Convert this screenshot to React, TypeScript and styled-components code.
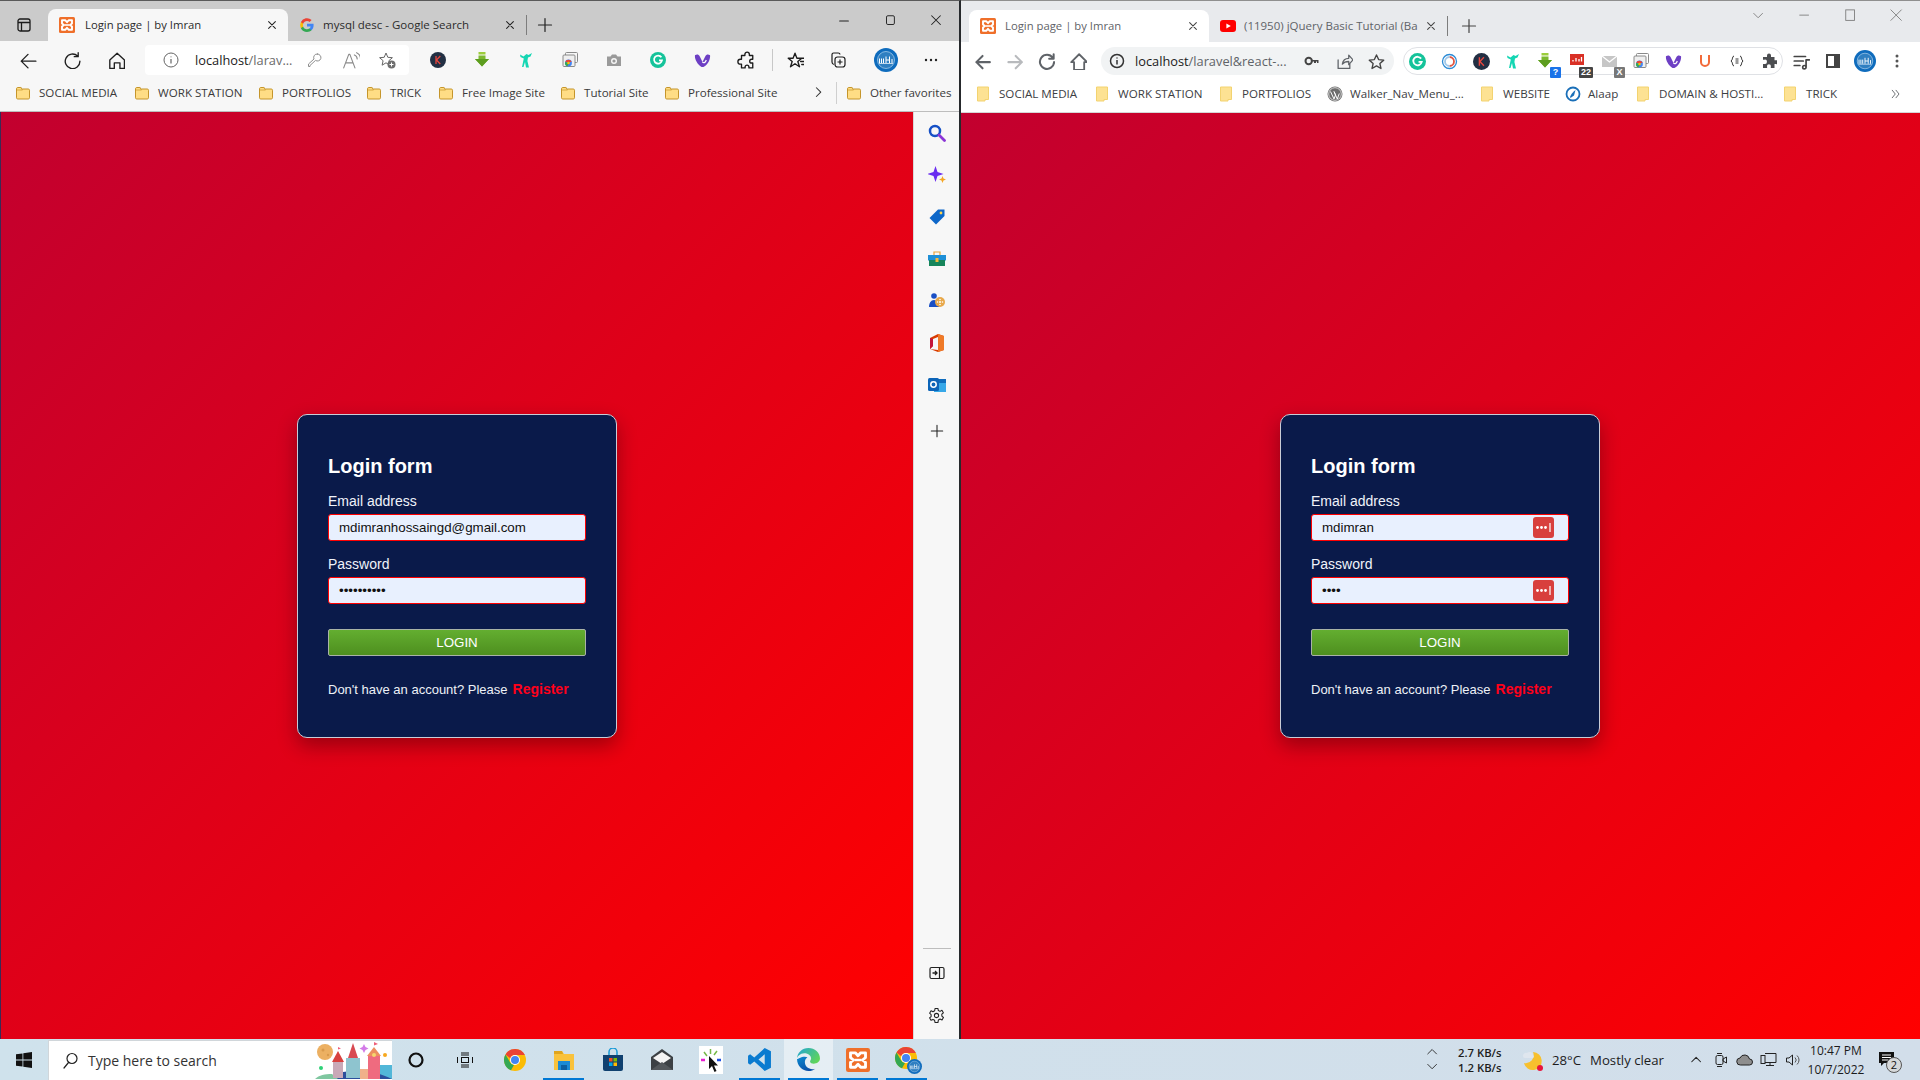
import React from "react";
import styled, { createGlobalStyle } from "styled-components";

const UI = `"Open Sans", "Noto Sans", "Liberation Sans", sans-serif`;
const ARIAL = `"Liberation Sans", Arial, sans-serif`;

const Global = createGlobalStyle`
  html, body { margin: 0; padding: 0; height: 100%; overflow: hidden; }
  #root { height: 100%; }
  * { box-sizing: border-box; }
`;

/* ---------- page ---------- */
const Desktop = styled.div`
  width: 1920px; height: 1080px; display: flex; flex-direction: column; font-family: ${UI};
`;
const Windows = styled.div`
  flex: 1; min-height: 0; display: flex;
`;
const Win = styled.section<{ $w: number; $edge?: boolean; $top: string }>`
  flex: 0 0 ${(p) => p.$w}px; display: flex; flex-direction: column; min-width: 0;
  border-top: 1px solid ${(p) => p.$top};
  border-right: ${(p) => (p.$edge ? "2px solid #26292c" : "none")};
  background: #fff;
`;
const Strip = styled.div<{ $bg: string; $h: number }>`
  flex: 0 0 ${(p) => p.$h}px; background: ${(p) => p.$bg}; display: flex; align-items: flex-end;
`;
const StripSlot = styled.div<{ $w: number }>`
  flex: 0 0 ${(p) => p.$w}px; height: 32px; display: flex; align-items: center; justify-content: center;
`;
const Tab = styled.div<{ $active?: boolean; $w: number; $bg?: string; $color: string; $font: number }>`
  flex: 0 0 ${(p) => p.$w}px; height: 32px; display: flex; align-items: center; padding: 0 10px 1px 11px;
  background: ${(p) => (p.$active ? p.$bg : "transparent")}; border-radius: 8px 8px 0 0;
  color: ${(p) => p.$color}; font-size: ${(p) => p.$font}px; white-space: nowrap;
`;
const TabTitle = styled.span<{ $ml: number }>`
  flex: 1; min-width: 0; overflow: hidden; margin-left: ${(p) => p.$ml}px; padding-right: 6px;
`;
const StripDivider = styled.div`
  flex: 0 0 1px; height: 20px; margin-bottom: 6px; background: #7d7d7d;
`;
const WinControls = styled.div<{ $color: string }>`
  margin-left: auto; display: flex; align-self: flex-start; color: ${(p) => p.$color};
`;
const WinBtn = styled.div<{ $w: number; $h: number }>`
  flex: 0 0 ${(p) => p.$w}px; height: ${(p) => p.$h}px; display: flex; align-items: center; justify-content: center;
`;

const Toolbar = styled.div<{ $bg: string; $pad: number }>`
  flex: 0 0 38px; display: flex; align-items: center; background: ${(p) => p.$bg}; padding-left: ${(p) => p.$pad}px;
`;
const Slot = styled.div<{ $w: number; $ml?: number; $tint?: string }>`
  flex: 0 0 ${(p) => p.$w}px; height: 28px; display: flex; align-items: center; justify-content: center;
  margin-left: ${(p) => p.$ml ?? 0}px; color: ${(p) => p.$tint ?? "#1f1f1f"};
`;
const Address = styled.div<{ $w: number; $ml: number; $bg: string; $pl: number; $pr: number; $r: number; $h: number }>`
  flex: 0 0 ${(p) => p.$w}px; height: ${(p) => p.$h}px; margin-left: ${(p) => p.$ml}px; background: ${(p) => p.$bg};
  border-radius: ${(p) => p.$r}px; display: flex; align-items: center;
  padding: 0 ${(p) => p.$pr}px 0 ${(p) => p.$pl}px;
`;
const Url = styled.span<{ $ml: number; $color: string; $size: number }>`
  flex: 1; min-width: 0; margin-left: ${(p) => p.$ml}px; color: ${(p) => p.$color}; font-size: ${(p) => p.$size}px;
  white-space: nowrap; overflow: hidden;
  b { font-weight: 400; color: #1a1a1a; }
`;
const ToolSep = styled.div`
  flex: 0 0 8px; height: 22px; display: flex; justify-content: center;
  &::before { content: ""; width: 1px; background: #c8c8c8; }
`;
const ExtPill = styled.div`
  flex: 0 0 379px; height: 28px; margin-left: 9px; border: 1px solid #dfe1e5; border-radius: 14px;
  display: flex; align-items: center; gap: 6px;
`;
const PillSlot = styled.div`
  flex: 0 0 26px; height: 26px; display: flex; align-items: center; justify-content: center; position: relative;
`;
const Badge = styled.span<{ $bg: string }>`
  position: absolute; right: -3px; bottom: -4px; min-width: 11px; height: 11px; padding: 0 2px; background: ${(p) => p.$bg};
  color: #fff; font: 700 9px/11px ${ARIAL}; border-radius: 1px; text-align: center;
`;

const Bookmarks = styled.div<{ $bg: string; $pad: number }>`
  flex: 0 0 33px; display: flex; align-items: center; background: ${(p) => p.$bg}; padding: 0 0 5px ${(p) => p.$pad}px;
  border-bottom: 1px solid ${(p) => (p.$bg === "#fff" ? "#d6d6d6" : "#bdbdbd")};
  font-size: 11.6px; color: #3a3a3a;
`;
const Mark = styled.div<{ $gap: number; $w: number; $color: string }>`
  flex: 0 0 ${(p) => p.$w}px; display: flex; align-items: center; gap: ${(p) => p.$gap}px; white-space: nowrap;
  color: ${(p) => p.$color}; overflow: hidden;
`;
const MarkEnd = styled.div<{ $ml: number }>`
  margin-left: ${(p) => p.$ml}px; display: flex; align-items: center; gap: 8px; white-space: nowrap;
`;
const MarkSep = styled.div`
  width: 1px; height: 22px; background: #cfcfcf;
`;

const Body = styled.div`
  flex: 1; min-height: 0; display: flex;
`;
const Stage = styled.main<{ $trim?: number; $line?: boolean }>`
  flex: 1; min-width: 0; display: flex; align-items: center; justify-content: center;
  padding-right: ${(p) => p.$trim ?? 0}px;
  background: linear-gradient(to bottom right, #c2002f 0%, #ff0000 100%);
  border-left: ${(p) => (p.$line ? "1px solid #3b2a55" : "none")};
`;
const Side = styled.aside`
  flex: 0 0 46px; background: #f7f7f7; border-left: 1px solid #d8d8d8; display: flex; flex-direction: column;
  align-items: center;
`;
const SideIcon = styled.div<{ $mt?: number }>`
  flex: 0 0 42px; width: 100%; display: flex; align-items: center; justify-content: center; color: #222;
  margin-top: ${(p) => p.$mt ?? 0}px;
`;
const SideFoot = styled.div`
  margin-top: auto; width: 100%; display: flex; flex-direction: column; align-items: center; padding-bottom: 3px;
`;
const SideRule = styled.div`
  width: 28px; height: 1px; background: #bdbdbd; margin-bottom: 3px;
`;

/* ---------- login card ---------- */
const Card = styled.form`
  width: 320px; height: 324px; padding: 39px 30px 0; background: #0a1a4a; border: 1px solid #c9ccd6; border-radius: 10px;
  box-shadow: 0 8px 20px rgba(0, 0, 0, 0.32); font-family: ${ARIAL}; color: #fff; display: flex; flex-direction: column;
`;
const Title = styled.h2`
  margin: 0 0 15px; font-size: 20px; line-height: 24px; font-weight: 700;
`;
const Label = styled.label`
  display: block; font-size: 14px; line-height: 16px; margin-bottom: 5px; color: #f0f3fa;
`;
const Field = styled.div`
  position: relative; height: 27px; margin-bottom: 15px;
`;
const Input = styled.input`
  display: block; width: 100%; height: 27px; padding: 0 10px; border: 1px solid #ff0000; border-radius: 3px; outline: none;
  background: #e8f0fe; color: #111; font-family: ${ARIAL}; font-size: 13.33px;
`;
const PassBadge = styled.span`
  position: absolute; top: 3px; right: 15px; width: 21px; height: 21px; display: block; line-height: 0;
`;
const LoginBtn = styled.button`
  height: 27px; margin-top: 10px; background: linear-gradient(#63ae30, #4e8f1f); border: 1px solid #a9b3a6; border-radius: 2px;
  color: #fff; font-family: ${ARIAL}; font-size: 13.33px; padding: 0;
`;
const Foot = styled.p`
  margin: 25px 0 0; font-size: 13px; line-height: 16px; color: #eef1f7;
  a { color: #ff0019; font-weight: 700; font-size: 14px; margin-left: 5px; text-decoration: none; }
`;

/* ---------- taskbar ---------- */
const Taskbar = styled.footer`
  flex: 0 0 40px; display: flex; align-items: stretch; background: linear-gradient(90deg, #cfe2ec, #d2deea);
  color: #1c1c1c;
`;
const StartBtn = styled.div`
  flex: 0 0 46px; display: flex; align-items: center; justify-content: center; padding-left: 1px;
`;
const SearchBox = styled.div`
  flex: 0 0 344px; margin: 1px 0 0 2px; background: #fff; display: flex; align-items: center; padding-left: 13px;
  border: 1px solid #d0d6da; border-width: 1px 0 0 1px;
`;
const SearchText = styled.span`
  margin-left: 9px; font-size: 14px; color: #333; white-space: nowrap;
`;
const Doodle = styled.div`
  margin-left: auto; height: 100%; line-height: 0;
`;
const BarPlain = styled.div<{ $w: number }>`
  flex: 0 0 ${(p) => p.$w}px; display: flex; align-items: center; justify-content: center;
`;
const BarApp = styled.div<{ $on?: boolean; $hi?: boolean }>`
  flex: 0 0 49px; position: relative; display: flex; align-items: center; justify-content: center;
  background: ${(p) => (p.$hi ? "rgba(255,255,255,.45)" : "transparent")};
  &::after {
    content: ""; position: absolute; bottom: 0; left: 4px; right: 4px; height: 2px;
    background: ${(p) => (p.$on ? "#0078d4" : "transparent")};
  }
`;
const Tray = styled.div`
  margin-left: auto; flex: 0 0 499px; display: flex; align-items: center;
`;
const TraySlot = styled.div<{ $w: number; $ml?: number }>`
  flex: 0 0 ${(p) => p.$w}px; margin-left: ${(p) => p.$ml ?? 0}px; display: flex; flex-direction: column; align-items: center;
  justify-content: center; height: 100%;
`;
const Speed = styled.div`
  flex: 0 0 43px; min-width: 0; margin-left: 13px; text-align: right; font-size: 11.3px; font-weight: 600; line-height: 15px; white-space: nowrap;
`;
const Weather = styled.span<{ $ml: number }>`
  margin-left: ${(p) => p.$ml}px; font-size: 13.2px; white-space: nowrap;
`;
const Clock = styled.div`
  flex: 0 0 62px; text-align: center; font-size: 12px; line-height: 19px; white-space: nowrap;
`;
const Notify = styled.div`
  flex: 1; position: relative; display: flex; align-items: center; padding-left: 11px; height: 100%;
`;
const NotifyCount = styled.span`
  position: absolute; left: 19px; top: 18px; width: 16px; height: 16px; border-radius: 50%; background: #d6d8da; border: 1px solid #555;
  font-size: 11px; line-height: 14px; text-align: center; color: #111;
`;

/* ---------- icons ---------- */
type IP = { s?: number; c?: string };
const Svg = ({ s = 16, children, vb = "0 0 16 16" }: { s?: number; children: React.ReactNode; vb?: string }) => (
  <svg width={s} height={s} viewBox={vb} fill="none" style={{ display: "block", flex: "none" }}>{children}</svg>
);
const Line = ({ s = 16, c = "currentColor", d, w = 1.2 }: IP & { d: string; w?: number }) => (
  <Svg s={s}><path d={d} stroke={c} strokeWidth={w} strokeLinecap="round" strokeLinejoin="round" /></Svg>
);
const Xampp = ({ s = 16 }: IP) => (
  <Svg s={s}>
    <rect width="16" height="16" rx="1.5" fill="#ef6f2a" />
    <path d="M3 3.2h3.2L8 5.2l1.8-2H13v3.2l-2 1.6 2 1.6v3.2H9.8L8 10.8l-1.8 2H3V9.6L5 8 3 6.4z" stroke="#fff" strokeWidth="1.9" strokeLinejoin="round" />
    <path d="M5.6 8h4.8" stroke="#fff" strokeWidth="1.6" />
  </Svg>
);
const GoogleG = ({ s = 16 }: IP) => (
  <Svg s={s}>
    <path d="M14.6 8.2c0-.5 0-1-.1-1.4H8v2.7h3.7a3.2 3.2 0 0 1-1.4 2.1v1.7h2.2c1.3-1.2 2.1-3 2.1-5.1z" fill="#4285f4" />
    <path d="M8 15c1.9 0 3.4-.6 4.5-1.7l-2.2-1.7a4.1 4.1 0 0 1-6.2-2.2H1.9v1.8A7 7 0 0 0 8 15z" fill="#34a853" />
    <path d="M4.1 9.4a4.1 4.1 0 0 1 0-2.7V4.9H1.9a7 7 0 0 0 0 6.3z" fill="#fbbc05" />
    <path d="M8 3.9c1 0 1.9.4 2.6 1l2-2A7 7 0 0 0 1.9 4.9l2.2 1.8C4.7 5.1 6.2 3.9 8 3.9z" fill="#ea4335" />
  </Svg>
);
const YouTube = () => (
  <Svg s={16}><rect y="2" width="16" height="12" rx="3" fill="#f00" /><path d="M6.4 5.4v5.2L10.8 8z" fill="#fff" /></Svg>
);
const Close = ({ c = "#222" }: IP) => <Line s={12} c={c} w={1.4} d="M3.5 3.5l9 9M12.5 3.5l-9 9" />;
const Plus = ({ c = "#222", s = 16 }: IP) => <Line s={s} c={c} w={1.2} d="M8 1.5v13M1.5 8h13" />;
const TabsIcon = () => (
  <Svg s={16}><rect x="2" y="2" width="12" height="12" rx="2" stroke="#1b1b1b" strokeWidth="1.3" /><path d="M2 5.5h12M5.5 5.5V14" stroke="#1b1b1b" strokeWidth="1.3" /></Svg>
);
const KeyIcon = ({ c = "#888", solid }: IP & { solid?: boolean }) =>
  solid ? (
    <Svg s={16}><circle cx="4.7" cy="8" r="3.2" stroke={c} strokeWidth="2" /><path d="M7.5 7h7v3h-1.5V8.6h-1V10H10V8.6H7.5z" fill={c} /></Svg>
  ) : (
    <Line c={c} w={1} d="M10.5 2a3.5 3.5 0 1 1-2 6.4L3 13.5v1H1.5V12L7 7a3.5 3.5 0 0 1 3.5-5z" />
  );
const FolderEdge = () => (
  <Svg s={16}>
    <path d="M1.5 3.8c0-.7.5-1.3 1.2-1.3h3.2l1.6 1.5h5.8c.7 0 1.2.5 1.2 1.2v7.6c0 .7-.5 1.2-1.2 1.2H2.7c-.7 0-1.2-.5-1.2-1.2z" fill="#ffdd85" stroke="#c5952b" strokeWidth="1" />
    <path d="M1.8 5h5.7L6 3" stroke="#c5952b" strokeWidth=".7" />
  </Svg>
);
const FolderChrome = () => (
  <svg width="12" height="16" viewBox="0 0 12 16" fill="none" style={{ display: "block", flex: "none" }}>
    <path d="M.5 1h11v12.5H8V15H.5z" fill="#fde293" stroke="#f3d370" />
  </svg>
);
const Grammarly = ({ s = 16 }: IP) => (
  <Svg s={s}><circle cx="8" cy="8" r="8" fill="#15c39a" /><path d="M11.4 5.3A4 4 0 1 0 12 8.4H9" stroke="#fff" strokeWidth="1.7" /></Svg>
);
const KAvatar = ({ s = 16 }: IP) => (
  <Svg s={s}><circle cx="8" cy="8" r="8" fill="#222f43" /><path d="M6 4v8M10.3 4L6.5 8l3.8 4" stroke="#e6463e" strokeWidth="1.3" /></Svg>
);
const DownArrow = () => (
  <Svg s={18} vb="0 0 18 18"><path d="M5.5 1h7v2.5h-7z" fill="#9ccc3c" /><path d="M5.5 4.5h7V8H16l-7 7.5L2 8h3.5z" fill="#7cb82f" /><path d="M9 15.5L2 8h14z" fill="#5d9d1f" /></Svg>
);
const Figure = () => (
  <Svg s={18} vb="0 0 18 18"><path d="M3 3.5l3.5 2 3-2.5 2 1 3.5-2-1.5 3.5-2.5 1-.6 3.5 1.6 6.5H9L8 11 6.5 16H5l1.8-8.5L3.5 6z" fill="#14d6b3" /></Svg>
);
const ChromeStack = () => (
  <Svg s={18} vb="0 0 18 18">
    <rect x="4.5" y="1.5" width="12" height="10" rx="1" stroke="#8a8a8a" /><rect x="2" y="4" width="12" height="11.5" rx="1" fill="#efefef" stroke="#8a8a8a" />
    <circle cx="7.5" cy="12" r="3.4" fill="#4285f4" /><path d="M4.2 11a3.4 3.4 0 0 1 6.4 0H7.5z" fill="#ea4335" /><path d="M4.2 11a3.4 3.4 0 0 0 2.3 4.3L8 12z" fill="#34a853" /><circle cx="7.5" cy="12" r="1.3" fill="#fbbc05" />
  </Svg>
);
const Camera = () => (
  <Svg s={16}><path d="M1 4.5h3.5L6 2.5h4l1.5 2H15V14H1z" fill="#9a9a9a" /><circle cx="8" cy="9" r="3" fill="#f7f7f7" /><circle cx="8" cy="9" r="1.6" fill="#9a9a9a" /></Svg>
);
const Viber = ({ s = 18 }: IP) => (
  <Svg s={s} vb="0 0 18 18"><path d="M1 3.5c2-1.5 4-1 5 1l3 6 3-6c1-2 3-2.5 5-1 .5 4-2 10-7 12.5h-2C4 13.5.5 8 1 3.5z" fill="#6d3fc4" /><path d="M9 10.5c1 1.5 3 1 4-2" stroke="#fff" strokeWidth="1.3" /></Svg>
);
const PuzzleOutline = () => (
  <Line s={18} c="#1c1c1c" w={1.2} d="M7 3a2 2 0 1 1 4 0v1h3v3.3h-1a1.7 1.7 0 1 0 0 3.4h1V15h-3.4v-.8a1.7 1.7 0 1 0-3.4 0v.8H4v-3.3H3a2.2 2.2 0 1 1 0-4.4h1V4h3z" />
);
const FavList = () => (
  <Line s={18} c="#1c1c1c" w={1.2} d="M8 2l1.7 4.4H14L10.5 9.3 12 14 8 11.3 4 14l1.500-4.700L2 6.400h4.300zM12 6.400h4M13 9.300h3M14 12h2" />
);
const Collections = () => (
  <Svg s={18} vb="0 0 18 18"><path d="M3 11V3.5C3 2.500 3.800 2 4.600 2h4.600c1 0 1.800.7 1.800 1.600M3 11c0 1.200.6 2 1.800 2.500" stroke="#1c1c1c" strokeWidth="1.2" /><rect x="6" y="6" width="10" height="10" rx="2.5" fill="#f7f7f7" stroke="#1c1c1c" strokeWidth="1.2" /><path d="M11 8.500v5M8.500 11h5" stroke="#1c1c1c" strokeWidth="1.2" /></Svg>
);
const Avatar = ({ s = 24 }: IP) => (
  <Svg s={s} vb="0 0 24 24">
    <circle cx="12" cy="12" r="12" fill="#0f6cbd" /><circle cx="12" cy="12" r="8.5" fill="#2f7fc1" stroke="#cfe5f6" strokeWidth=".6" />
    <path d="M5.500 15V10.500M7.500 15V10.500M9.500 15V10.500M12 15V8.500M12 12h3.500M15.500 15V8.500M18 15V11" stroke="#fff" strokeWidth="1" />
    <path d="M5 15.500h14" stroke="#fff" strokeWidth=".7" />
  </Svg>
);
const Dots = () => (
  <Svg s={16}><circle cx="3" cy="8" r="1.2" fill="#222" /><circle cx="8" cy="8" r="1.2" fill="#222" /><circle cx="13" cy="8" r="1.2" fill="#222" /></Svg>
);
const Alaap = () => (
  <Svg s={16}><circle cx="8" cy="8" r="6.5" stroke="#1a6fb8" strokeWidth="1.8" /><path d="M5 11c1-3 3-5 5.500-7L9 9.500 5.500 12z" fill="#1a6fb8" /></Svg>
);
const Wordpress = () => (
  <Svg s={16}><circle cx="8" cy="8" r="7.5" fill="#6d6d6d" /><circle cx="8" cy="8" r="6.3" stroke="#fff" strokeWidth=".7" /><path d="M3.500 5.500L7 13l1.500-4-1.500-3.500M7 5.500L10.300 13l2-5.500" stroke="#fff" strokeWidth="1" /></Svg>
);
const RedBadge = () => (
  <Svg s={16}><path d="M1 1h14v11H1z" fill="#d93025" /><path d="M4 8.500V7M7 8.500V5M10 8.500V6M12.500 8.500V4" stroke="#fff" strokeWidth="1.3" /></Svg>
);
const MailGrey = () => (
  <Svg s={17} vb="0 0 17 17"><rect x="1" y="3" width="15" height="11" fill="#c6c6c6" /><path d="M1 3l7.500 6L16 3" stroke="#fff" strokeWidth="1.3" /></Svg>
);
const Circle360 = () => (
  <Svg s={17} vb="0 0 17 17"><circle cx="8.5" cy="8.5" r="7" stroke="#2b8bd6" strokeWidth="1.3" /><path d="M8.500 4a4.500 4.500 0 0 1 0 9" stroke="#e2553f" strokeWidth="1.8" /><path d="M8.500 13a4.500 4.500 0 0 1 0-9" stroke="#9fc7e8" strokeWidth="1.8" /></Svg>
);
const PuzzleSolid = () => (
  <Svg s={16}><path d="M6 2.500a2 2 0 1 1 4 0V4h3.500v3.300H15a2 2 0 1 1 0 3.800h-1.500V15H9.800v-1.300a1.900 1.900 0 1 0-3.700 0V15H2v-4h1.300a2.200 2.200 0 1 0 0-4.300H2V4h4z" fill="#4b4d50" /></Svg>
);
const Media = () => (
  <Line s={18} c="#444" w={1.5} d="M2 4h10M2 8h8M2 12h5M12.500 13.500V7h3M12.500 13.500a1.500 1.500 0 1 1-3 0 1.500 1.500 0 0 1 3 0z" />
);
const PanelIcon = () => (
  <Svg s={16}><rect x="2" y="2" width="12" height="12" stroke="#444" strokeWidth="2" fill="#fff" /><rect x="9" y="2" width="5" height="12" fill="#444" /></Svg>
);
const VDots = () => (
  <Svg s={16}><circle cx="8" cy="3" r="1.5" fill="#555" /><circle cx="8" cy="8" r="1.5" fill="#555" /><circle cx="8" cy="13" r="1.5" fill="#555" /></Svg>
);

/* taskbar apps */
const WinLogo = () => (
  <Svg s={16}><path d="M0 2.300l6.500-.9v6.200H0zM7.300 1.300L16 0v7.600H7.300zM0 8.400h6.500v6.200L0 13.700zM7.300 8.400H16V16l-8.700-1.300z" fill="#111" /></Svg>
);
const ChromeApp = ({ s = 24 }: IP) => (
  <Svg s={s} vb="0 0 24 24">
    <circle cx="12" cy="12" r="11" fill="#fbbc05" />
    <path d="M2.500 6.500A11 11 0 0 1 21.900 7H12a5 5 0 0 0-4.700 3.300z" fill="#ea4335" />
    <path d="M2.500 6.500l4.800 8.300A5.300 5.300 0 0 0 11 17L8 22.300A11 11 0 0 1 2.500 6.500z" fill="#34a853" />
    <circle cx="12" cy="12" r="5" fill="#fff" /><circle cx="12" cy="12" r="4" fill="#4285f4" />
  </Svg>
);
const ExplorerApp = () => (
  <Svg s={24} vb="0 0 24 24"><path d="M2 3h8l2 3h10v16H2z" fill="#f9c23c" /><path d="M2 3h8l1 3H2z" fill="#e0a51e" /><path d="M6 13h12v9H6z" fill="#1b8ad6" /><path d="M9 22v-5h6v5z" fill="#0c5fa3" /></Svg>
);
const StoreApp = () => (
  <Svg s={24} vb="0 0 24 24"><path d="M2 7h20v14a2 2 0 0 1-2 2H4a2 2 0 0 1-2-2z" fill="#10406f" /><path d="M8 7V4a4 4 0 0 1 8 0v3" stroke="#1a9bd7" strokeWidth="1.5" /><rect x="8" y="10" width="3.5" height="3.5" fill="#f25022" /><rect x="12.5" y="10" width="3.5" height="3.5" fill="#7fba00" /><rect x="8" y="14.5" width="3.5" height="3.5" fill="#00a4ef" /><rect x="12.5" y="14.5" width="3.5" height="3.5" fill="#ffb900" /></Svg>
);
const MailApp = () => (
  <Svg s={24} vb="0 0 24 24"><path d="M12 1L23 9v13H1V9z" fill="#3c4044" /><path d="M3 10l9 6 9-6-9-6z" fill="#f4f4f4" /><path d="M1 22l11-8 11 8z" fill="#53575b" /></Svg>
);
const CursorApp = () => (
  <svg width="24" height="28" viewBox="0 0 24 28" style={{ display: "block" }}>
    <rect width="24" height="28" fill="#fff" />
    <path d="M11.500 3v5M5 6l3 4M18 5l-3 4" stroke="#76b947" strokeWidth="1.5" />
    <path d="M2 14h4" stroke="#e91ed1" strokeWidth="2.5" /><path d="M18 14h4" stroke="#1d4fe0" strokeWidth="2.5" />
    <path d="M10 10v13l3-3 2.500 6 2-1-2.500-5.500h4z" fill="#111" />
  </svg>
);
const VSCode = () => (
  <Svg s={25} vb="0 0 24 24"><path d="M17 1l6 3v16l-6 3L7 14l-4 3-2-1.500V8.500L3 7l4 3zM17 7l-6 5 6 5z" fill="#0a7bd0" /></Svg>
);
const EdgeApp = ({ s = 25 }: IP) => (
  <Svg s={s} vb="0 0 24 24">
    <defs>
      <linearGradient id="edgeTop" x1="0" y1="0" x2="1" y2="0.6"><stop offset="0" stopColor="#1fa4d6" /><stop offset="1" stopColor="#5fd45c" /></linearGradient>
      <linearGradient id="edgeLow" x1="0" y1="0" x2="0.6" y2="1"><stop offset="0" stopColor="#0c8ad0" /><stop offset="1" stopColor="#0a4fa8" /></linearGradient>
    </defs>
    <path d="M12 1C5.900 1 1 5.500 1 11.500c0-2.500 3-5.500 7-5.500 4 0 6.500 2.500 6.500 5 0 1.200-1 2-1 3 0 1.500 2 2 3.500 2 3 0 6-2 6-5C23 5.500 18 1 12 1z" fill="url(#edgeTop)" />
    <path d="M1 11.500C1 18 6 23 12 23c2.500 0 4.700-.8 6.500-2.200-4.500 1.700-10-1-10-6.300 0-2 1-3.700 2.500-4.700-.8-.3-1.700-.5-2.500-.5-4 0-7 2.500-7 2.200z" fill="url(#edgeLow)" />
  </Svg>
);
const ChromeBadgeApp = () => (
  <span style={{ position: "relative", display: "block", width: 26, height: 28 }}>
    <ChromeApp s={24} />
    <span style={{ position: "absolute", right: -2, bottom: 0, display: "block" }}><Avatar s={15} /></span>
  </span>
);

/* sidebar */
const SideSearch = () => (
  <Svg s={18} vb="0 0 18 18"><circle cx="7" cy="7" r="5" stroke="#1550c6" strokeWidth="2.5" /><path d="M11 11l5.500 5.500" stroke="#8b35d6" strokeWidth="2.8" strokeLinecap="round" /></Svg>
);
const SideSpark = () => (
  <Svg s={18} vb="0 0 18 18"><path d="M7.500 0l2 6 6 2-6 2-2 6-2-6-6-2 6-2z" fill="#6a2cf0" /><path d="M14.500 10l1 2.500 2.500 1-2.500 1-1 2.500-1-2.500-2.500-1 2.500-1z" fill="#f5a623" /></Svg>
);
const SideTag = () => (
  <Svg s={18} vb="0 0 18 18"><path d="M10 1.500h6.500V8L8 16.500 1.500 10z" fill="#0d67c9" /><circle cx="13" cy="5" r="1.4" fill="#ffd24d" /></Svg>
);
const SideBox = () => (
  <Svg s={18} vb="0 0 18 18"><path d="M6 5V2h6v3" stroke="#e8a33d" strokeWidth="1.2" /><rect y="5" width="18" height="5.5" fill="#1f8fd6" /><rect x="1" y="10" width="16" height="6" fill="#16855b" /><rect x="7.5" y="8" width="3" height="4" fill="#f5b93d" /></Svg>
);
const SideGames = () => (
  <Svg s={18} vb="0 0 18 18"><circle cx="6" cy="4" r="2.8" fill="#1a4fc4" /><path d="M1 15c0-4 2-7 5-7s5 3 5 7z" fill="#1a4fc4" /><circle cx="12" cy="10" r="5" fill="#e8a84a" /><circle cx="12" cy="10" r="1" fill="#fff" /><circle cx="9.5" cy="10" r=".8" fill="#fff" /><circle cx="14.5" cy="10" r=".8" fill="#fff" /><circle cx="12" cy="7.5" r=".8" fill="#fff" /><circle cx="12" cy="12.5" r=".8" fill="#fff" /></Svg>
);
const SideOffice = () => (
  <Svg s={18} vb="0 0 18 18"><path d="M10 0l6 2v14l-6 2-8-3 8 1V3L5 5v7l-3 3V4z" fill="#d83b01" /><path d="M10 0l6 2v14l-6 2z" fill="#ef7a28" /><path d="M2 15V4l3 1v7z" fill="#c4163a" /></Svg>
);
const SideOutlook = () => (
  <Svg s={18} vb="0 0 18 18"><rect x="6" y="3" width="12" height="13" fill="#37a8e8" /><rect x="6" y="3" width="12" height="4" fill="#0f6cbd" /><rect y="2" width="11" height="13" rx="1.5" fill="#0c64b8" /><circle cx="5.5" cy="8.5" r="2.7" stroke="#fff" strokeWidth="1.5" /></Svg>
);
const SideExit = () => (
  <Svg s={16}><rect x="1" y="2.500" width="14" height="11" rx="1.5" stroke="#222" strokeWidth="1.2" /><path d="M10.500 2.500v11" stroke="#222" strokeWidth="1.2" /><path d="M3.500 8h4.500M6 6l2 2-2 2" stroke="#222" strokeWidth="1.3" /></Svg>
);
const Gear = () => (
  <Svg s={17} vb="0 0 24 24"><path d="M10 2h4l.6 3 2.400 1.200 2.700-1.500 2 3.500-2.200 2 .1 2.800 2.200 1.800-2 3.500-2.800-1.300-2.300 1.300L14 22h-4l-.7-3.200-2.300-1.300-2.800 1.300-2-3.500 2.200-1.800v-2.800L2.300 8.700l2-3.500L7 6.700l2.400-1.400z" stroke="#222" strokeWidth="1.5" strokeLinejoin="round" /><circle cx="12" cy="12" r="3" stroke="#222" strokeWidth="1.5" /></Svg>
);

/* tray */
const WeatherIcon = () => (
  <Svg s={24} vb="0 0 24 24"><path d="M12 4a9 9 0 1 1-9 11 8 8 0 0 0 9-11z" fill="#f7c02e" /><path d="M2 8a3 3 0 0 1 4-3 3.500 3.500 0 0 1 6 2 2 2 0 0 1 0 3H4a2 2 0 0 1-2-2z" fill="#dfe6ee" /><circle cx="19" cy="20" r="3" fill="#e8143c" /></Svg>
);
const Castle = () => (
  <svg width="80" height="39" viewBox="0 0 80 39" style={{ display: "block" }}>
    <circle cx="13" cy="11" r="8" fill="#ecb062" />
    <circle cx="11" cy="9" r="1.500" fill="#d99a4c" /><circle cx="16" cy="14" r="1.200" fill="#d99a4c" />
    <path d="M66 24h14v14H62z" fill="#52b7d8" />
    <path d="M15 38c6-6 16-8 30-8s25 3 35 8z" fill="#2c4f9c" />
    <path d="M3 38c4-4 10-5 17-5l6 5z" fill="#7fc7a0" />
    <rect x="21" y="21" width="10" height="16" fill="#c9a9b7" />
    <path d="M20 21l6-11 6 11z" fill="#d8423f" />
    <path d="M26 10V6l3 1.500-3 1" fill="#ee5f7a" />
    <rect x="34" y="17" width="14" height="20" fill="#8ec4cf" />
    <path d="M36 17l5-15 5 15z" fill="#d84a52" />
    <rect x="56" y="14" width="12" height="24" fill="#ef6b7f" />
    <path d="M55 15l7-9 7 9z" fill="#ec8f5f" />
    <path d="M62 6V1l4 2-4 1.500" fill="#ee5f7a" />
    <circle cx="62" cy="14" r="2" fill="#f5d76e" />
    <path d="M52 3l1.500 3 3 1.500-3 1.500-1.500 3-1.500-3-3-1.500 3-1.500z" fill="#d37be8" />
    <circle cx="73" cy="14" r="2" fill="#f7a81e" />
    <circle cx="9" cy="27" r="2" fill="#2fd177" />
    <path d="M48 28h8v10h-8z" fill="#f0b08a" />
  </svg>
);
const Card3Dots = () => (
  <svg width="21" height="21" viewBox="0 0 21 21" style={{ display: "block" }}>
    <rect width="21" height="21" rx="3" fill="#d83f3d" />
    <circle cx="4.5" cy="10.5" r="1.4" fill="#fff" /><circle cx="8.5" cy="10.5" r="1.4" fill="#fff" /><circle cx="12.5" cy="10.5" r="1.4" fill="#fff" />
    <path d="M17 6v9" stroke="#fff" strokeWidth="1.2" />
  </svg>
);

/* ---------- data ---------- */
const edgeMarks = [
  ["SOCIAL MEDIA", 119], ["WORK STATION", 124], ["PORTFOLIOS", 108], ["TRICK", 72],
  ["Free Image Site", 122], ["Tutorial Site", 104], ["Professional Site", 148],
] as const;
const chromeMarks: { t: string; w: number; gap: number; i: React.ReactNode }[] = [
  { t: "SOCIAL MEDIA", w: 119, gap: 10, i: <FolderChrome /> },
  { t: "WORK STATION", w: 124, gap: 10, i: <FolderChrome /> },
  { t: "PORTFOLIOS", w: 107, gap: 10, i: <FolderChrome /> },
  { t: "Walker_Nav_Menu_...", w: 154, gap: 7, i: <Wordpress /> },
  { t: "WEBSITE", w: 84, gap: 10, i: <FolderChrome /> },
  { t: "Alaap", w: 72, gap: 7, i: <Alaap /> },
  { t: "DOMAIN & HOSTI...", w: 147, gap: 10, i: <FolderChrome /> },
  { t: "TRICK", w: 106, gap: 10, i: <FolderChrome /> },
];

const LoginCard = ({ email, pass, manager }: { email: string; pass: string; manager?: boolean }) => (
  <Card onSubmit={(e) => e.preventDefault()}>
    <Title>Login form</Title>
    <Label>Email address</Label>
    <Field>
      <Input type="text" value={email} readOnly />
      {manager && <PassBadge><Card3Dots /></PassBadge>}
    </Field>
    <Label>Password</Label>
    <Field>
      <Input type="password" value={pass} readOnly />
      {manager && <PassBadge><Card3Dots /></PassBadge>}
    </Field>
    <LoginBtn type="button">LOGIN</LoginBtn>
    <Foot>Don't have an account? Please<a href="#r">Register</a></Foot>
  </Card>
);

export default function App() {
  return (
    <Desktop>
      <Global />
      <Windows>
        {/* Edge window */}
        <Win $w={961} $edge $top="#5a5a5a">
          <Strip $bg="#cbcbcb" $h={40}>
            <StripSlot $w={48}><TabsIcon /></StripSlot>
            <Tab $active $bg="#f7f7f7" $w={240} $color="#2b2b2b" $font={11.3}>
              <Xampp /><TabTitle $ml={10}>Login page | by Imran</TabTitle><Close />
            </Tab>
            <Tab $w={238} $color="#2b2b2b" $font={11.5}>
              <GoogleG /><TabTitle $ml={8}>mysql desc - Google Search</TabTitle><Close />
            </Tab>
            <StripDivider />
            <StripSlot $w={36}><Plus /></StripSlot>
            <WinControls $color="#222">
              <WinBtn $w={46} $h={40}><Line s={14} d="M3 8h10" /></WinBtn>
              <WinBtn $w={46} $h={40}><Svg s={14}><rect x="4" y="2" width="9" height="10" rx="1.5" stroke="#222" strokeWidth="1.1" /></Svg></WinBtn>
              <WinBtn $w={46} $h={40}><Line s={14} d="M3 2l10 10M13 2L3 12" /></WinBtn>
            </WinControls>
          </Strip>
          <Toolbar $bg="#f7f7f7" $pad={6}>
            <Slot $w={44}><Line s={18} w={1.2} d="M15 9H2M8 3L2 9l6 6" /></Slot>
            <Slot $w={44}><Line s={18} w={1.2} d="M13 4.500A6.500 6.500 0 1 0 15 9M13.500 1.500v3.500H10" /></Slot>
            <Slot $w={44}><Line s={18} w={1.2} d="M2.500 8L9 2l6.500 6v7.500h-4V10.500h-5v5h-4z" /></Slot>
            <Address $w={264} $ml={7} $h={30} $r={4} $bg="#fff" $pl={16} $pr={4}>
              <Slot $w={20} $tint="#666"><Svg s={16}><circle cx="8" cy="8" r="7" stroke="#666" strokeWidth="1" /><path d="M8 7v4.500M8 4.500v.8" stroke="#666" strokeWidth="1.2" /></Svg></Slot>
              <Url $ml={14} $color="#6a6a6a" $size={12.8}><b>localhost</b>/larav...</Url>
              <Slot $w={36}><KeyIcon c="#8f8f8f" /></Slot>
              <Slot $w={36} $tint="#8a8a8a"><Line s={18} c="#8a8a8a" w={1} d="M1.500 15L6 3h1l4.500 12M3.500 10.500h6M11 3.500c1.500.5 2.500 2 2.500 3.500M13 1.500c2 1 3.500 3 3.500 5.500" /></Slot>
              <Slot $w={36}><Svg s={18} vb="0 0 18 18"><path d="M8 2l1.800 4.300 4.600.4-3.500 3 1 4.500L8 11.800 4.100 14.200l1-4.500-3.500-3 4.600-.4z" stroke="#666" strokeWidth="1" /><circle cx="13.5" cy="13.5" r="4" fill="#6e6e6e" /><path d="M13.500 11.500v4M11.500 13.500h4" stroke="#fff" strokeWidth="1" /></Svg></Slot>
            </Address>
            <Slot $w={44} $ml={7}><KAvatar /></Slot>
            <Slot $w={44}><DownArrow /></Slot>
            <Slot $w={44}><Figure /></Slot>
            <Slot $w={44}><ChromeStack /></Slot>
            <Slot $w={44}><Camera /></Slot>
            <Slot $w={44}><Grammarly /></Slot>
            <Slot $w={44}><Viber s={17} /></Slot>
            <Slot $w={44}><PuzzleOutline /></Slot>
            <ToolSep />
            <Slot $w={37}><FavList /></Slot>
            <Slot $w={50}><Collections /></Slot>
            <Slot $w={45}><Avatar s={24} /></Slot>
            <Slot $w={46}><Dots /></Slot>
          </Toolbar>
          <Bookmarks $bg="#f7f7f7" $pad={15}>
            {edgeMarks.map(([t, w]) => (
              <Mark key={t} $gap={8} $w={w} $color="#3a3a3a"><FolderEdge />{t}</Mark>
            ))}
            <MarkEnd $ml={0}><Line s={14} c="#333" d="M5 2l5 5-5 5" /></MarkEnd>
            <MarkEnd $ml={10}><MarkSep /></MarkEnd>
            <MarkEnd $ml={9}><FolderEdge />Other favorites</MarkEnd>
          </Bookmarks>
          <Body>
            <Stage $line><LoginCard email="mdimranhossaingd@gmail.com" pass="mdimran123" /></Stage>
            <Side>
              <SideIcon><SideSearch /></SideIcon>
              <SideIcon><SideSpark /></SideIcon>
              <SideIcon><SideTag /></SideIcon>
              <SideIcon><SideBox /></SideIcon>
              <SideIcon><SideGames /></SideIcon>
              <SideIcon><SideOffice /></SideIcon>
              <SideIcon><SideOutlook /></SideIcon>
              <SideIcon $mt={4}><Plus s={14} /></SideIcon>
              <SideFoot>
                <SideRule />
                <SideIcon><SideExit /></SideIcon>
                <SideIcon><Gear /></SideIcon>
              </SideFoot>
            </Side>
          </Body>
        </Win>

        {/* Chrome window */}
        <Win $w={959} $top="#8f8f8f">
          <Strip $bg="#e8eaed" $h={41}>
            <StripSlot $w={8} />
            <Tab $active $bg="#fff" $w={240} $color="#5f6368" $font={11.3}>
              <Xampp /><TabTitle $ml={9}>Login page | by Imran</TabTitle><Close c="#444" />
            </Tab>
            <Tab $w={238} $color="#5f6368" $font={11.5}>
              <YouTube /><TabTitle $ml={8}>(11950) jQuery Basic Tutorial (Ba</TabTitle><Close c="#444" />
            </Tab>
            <StripDivider />
            <StripSlot $w={41}><Plus c="#444" s={16} /></StripSlot>
            <WinControls $color="#7a7a7a">
              <WinBtn $w={46} $h={30}><Line s={14} d="M2 5l5 5 5-5" w={1} /></WinBtn>
              <WinBtn $w={46} $h={30}><Line s={14} d="M2 7h10" w={1} /></WinBtn>
              <WinBtn $w={46} $h={30}><Svg s={14}><rect x="2" y="1" width="10" height="12" stroke="#7a7a7a" /></Svg></WinBtn>
              <WinBtn $w={46} $h={30}><Line s={14} d="M1 1l12 12M13 1L1 13" w={1} /></WinBtn>
            </WinControls>
          </Strip>
          <Toolbar $bg="#fff" $pad={5}>
            <Slot $w={32} $tint="#5f6368"><Line s={18} w={1.8} d="M15 9H3M8.500 3.500L3 9l5.500 5.500" /></Slot>
            <Slot $w={32} $tint="#b8babd"><Line s={18} w={1.8} d="M3 9h12M9.500 3.500L15 9l-5.500 5.500" /></Slot>
            <Slot $w={32} $tint="#5f6368"><Line s={18} w={1.8} d="M14 5a6.300 6.300 0 1 0 1.200 4M14.800 2v4h-4" /></Slot>
            <Slot $w={32} $tint="#5f6368"><Line s={18} w={1.6} d="M2 9l7-7 7 7h-2.500v7h-9V9z" /></Slot>
            <Address $w={293} $ml={7} $h={28} $r={14} $bg="#f1f3f4" $pl={6} $pr={2}>
              <Slot $w={20}><Svg s={16}><circle cx="8" cy="8" r="6.5" stroke="#333" strokeWidth="1.5" /><path d="M8 7v4.500M8 4.500v.9" stroke="#333" strokeWidth="1.5" /></Svg></Slot>
              <Url $ml={8} $color="#5f6368" $size={12.8}><b>localhost</b>/laravel&amp;react-...</Url>
              <Slot $w={32}><KeyIcon c="#444" solid /></Slot>
              <Slot $w={32} $tint="#5f6368"><Line s={17} w={1.2} d="M2 6.500V14.500h11V10M6 10.500C6.500 7 9 5 12 5V2l4 4.500-4 4.500V8c-2.500 0-4.500.5-6 2.500z" /></Slot>
              <Slot $w={32} $tint="#444"><Line s={17} w={1.3} d="M8 1.800l2 4.400 4.800.5-3.600 3.200 1 4.700L8 12.200l-4.200 2.400 1-4.700L1.200 6.700 6 6.200z" /></Slot>
            </Address>
            <ExtPill>
              <PillSlot><Grammarly s={17} /></PillSlot>
              <PillSlot><Circle360 /></PillSlot>
              <PillSlot><KAvatar s={17} /></PillSlot>
              <PillSlot><Figure /></PillSlot>
              <PillSlot><DownArrow /><Badge $bg="#1a73e8">?</Badge></PillSlot>
              <PillSlot><RedBadge /><Badge $bg="#444">22</Badge></PillSlot>
              <PillSlot><MailGrey /><Badge $bg="#777">X</Badge></PillSlot>
              <PillSlot><ChromeStack /></PillSlot>
              <PillSlot><Viber s={17} /></PillSlot>
              <PillSlot><Svg s={16}><path d="M4 2v7a4 4 0 0 0 8 0V2" stroke="#f26b3a" strokeWidth="2" /></Svg></PillSlot>
              <PillSlot><Svg s={16}><path d="M5 3C3 3 4 7 2 8c2 1 1 5 3 5M11 3c2 0 1 4 3 5-2 1-1 5-3 5M6.500 6h3M6.500 8h3M6.500 10h3" stroke="#333" strokeWidth="1" /></Svg></PillSlot>
              <PillSlot><PuzzleSolid /></PillSlot>
            </ExtPill>
            <Slot $w={32} $ml={2}><Media /></Slot>
            <Slot $w={32}><PanelIcon /></Slot>
            <Slot $w={32}><Avatar s={22} /></Slot>
            <Slot $w={32}><VDots /></Slot>
          </Toolbar>
          <Bookmarks $bg="#fff" $pad={16}>
            {chromeMarks.map((m) => (
              <Mark key={m.t} $gap={m.gap} $w={m.w} $color="#3c4043">{m.i}{m.t}</Mark>
            ))}
            <MarkEnd $ml={0}><Line s={12} c="#5f6368" w={1.2} d="M3 3l4 5-4 5M8 3l4 5-4 5" /></MarkEnd>
          </Bookmarks>
          <Body>
            <Stage $trim={1}><LoginCard email="mdimran" pass="1234" manager /></Stage>
          </Body>
        </Win>
      </Windows>

      <Taskbar>
        <StartBtn><WinLogo /></StartBtn>
        <SearchBox>
          <Svg s={17} vb="0 0 17 17"><circle cx="10" cy="6.500" r="5" stroke="#222" strokeWidth="1.2" /><path d="M6.500 10.500L2 16" stroke="#222" strokeWidth="1.2" strokeLinecap="round" /></Svg>
          <SearchText>Type here to search</SearchText>
          <Doodle><Castle /></Doodle>
        </SearchBox>
        <BarPlain $w={48}><Svg s={16}><circle cx="8" cy="8" r="6.5" stroke="#111" strokeWidth="2.2" /></Svg></BarPlain>
        <BarPlain $w={50}><Svg s={18} vb="0 0 18 18"><path d="M5 2h8M5 16h8M1.500 6v6M16.500 6v6M5 4h8M5 14h8" stroke="#111" strokeWidth="1" /><rect x="5.500" y="6.500" width="7" height="5" stroke="#111" strokeWidth="1" /></Svg></BarPlain>
        <BarApp><ChromeApp /></BarApp>
        <BarApp $on><ExplorerApp /></BarApp>
        <BarApp><StoreApp /></BarApp>
        <BarApp><MailApp /></BarApp>
        <BarApp><CursorApp /></BarApp>
        <BarApp $on><VSCode /></BarApp>
        <BarApp $on $hi><EdgeApp /></BarApp>
        <BarApp $on><Xampp s={24} /></BarApp>
        <BarApp $on><ChromeBadgeApp /></BarApp>
        <Tray>
          <TraySlot $w={24}>
            <Line s={14} c="#222" w={1} d="M2 9l5-5 5 5" />
            <Line s={14} c="#222" w={1} d="M2 5l5 5 5-5" />
          </TraySlot>
          <Speed>2.7 KB/s<br />1.2 KB/s</Speed>
          <TraySlot $w={24} $ml={20}><WeatherIcon /></TraySlot>
          <Weather $ml={7}>28°C</Weather>
          <Weather $ml={9}>Mostly clear</Weather>
          <TraySlot $w={24} $ml={21}><Line s={14} c="#222" w={1.2} d="M2 10l5-5 5 5" /></TraySlot>
          <TraySlot $w={24}><Svg s={16}><rect x="3" y="3.500" width="7" height="9" rx="1.5" stroke="#222" /><path d="M10 7l3.500-2v6L10 9zM4 1.500h5M4 14.500h5" stroke="#222" /></Svg></TraySlot>
          <TraySlot $w={24}><Svg s={18} vb="0 0 18 18"><path d="M4.500 14a3.500 3.500 0 0 1-.5-7 5 5 0 0 1 9.500 1 3 3 0 0 1 0 6z" fill="#8e8e8e" stroke="#222" /></Svg></TraySlot>
          <TraySlot $w={24}><Svg s={17} vb="0 0 17 17"><path d="M5 2.500h11v9H3M6 14.500h8M10 11.500v3" stroke="#222" /><rect x="1" y="4.500" width="4" height="8" fill="#d2deea" stroke="#222" /></Svg></TraySlot>
          <TraySlot $w={24}><Svg s={16}><path d="M1.500 6v4H4l3.500 3V3L4 6z" stroke="#222" /><path d="M10 5.500a3.500 3.500 0 0 1 0 5M12 3.500a6 6 0 0 1 0 9" stroke="#555" /></Svg></TraySlot>
          <Clock>10:47 PM<br />10/7/2022</Clock>
          <Notify>
            <Svg s={17} vb="0 0 17 17"><path d="M1 1h15v11H6l-3 3v-3H1z" fill="#111" /><path d="M4 4h9M4 6.500h9M4 9h6" stroke="#fff" /></Svg>
            <NotifyCount>2</NotifyCount>
          </Notify>
        </Tray>
      </Taskbar>
    </Desktop>
  );
}
